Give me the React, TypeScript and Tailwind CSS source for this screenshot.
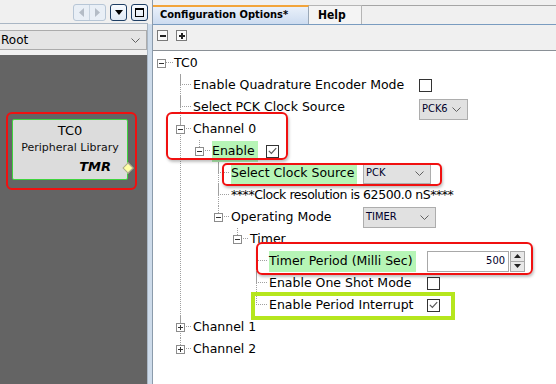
import type { ReactNode } from "react";

type TNode = {
  label: string;
  exp?: "-" | "+";
  green?: boolean;
  lw?: string;
  tight?: boolean;
  ctl?: ReactNode;
  children?: TNode[];
};

const Check = ({ on }: { on?: boolean }) => (
  <span className="flex h-[13px] w-[13px] shrink-0 items-center justify-center border border-[#333] bg-white">
    {on && (
      <svg width="9" height="8" viewBox="0 0 9 8">
        <path d="M0.8 3.8L3.4 6.4L8.2 1.2" stroke="#5a5a5a" strokeWidth="1.2" fill="none" />
      </svg>
    )}
  </span>
);

const Chevron = () => (
  <svg width="9" height="5" viewBox="0 0 9 5">
    <path d="M0.5 0.5L4.5 4.5L8.5 0.5" stroke="#606060" strokeWidth="1" fill="none" />
  </svg>
);

const Combo = ({ text, className }: { text: string; className: string }) => (
  <span className={`flex h-[21px] shrink-0 items-center justify-between border border-[#adadad] bg-[#e1e1e1] pl-[2px] pr-[6px] font-['DejaVu_Sans_Condensed','DejaVu_Sans',sans-serif] text-[11px] text-[#00002a] ${className}`}>
    {text}
    <Chevron />
  </span>
);

const Spin = () => (
  <span className="flex h-[21px] shrink-0 items-stretch">
    <span className="flex w-[82px] items-center justify-end border border-[#a8a8a8] bg-white pr-[3px] font-['DejaVu_Sans_Condensed','DejaVu_Sans',sans-serif] text-[11px] text-[#00002a]">500</span>
    <span className="ml-px flex w-[15px] flex-col border border-[#a8a8a8] bg-[#e8e8e8]">
      <span className="flex flex-1 items-center justify-center border-b border-[#a8a8a8]">
        <svg width="7" height="4" viewBox="0 0 7 4"><path d="M0 4L3.5 0L7 4Z" fill="#222" /></svg>
      </span>
      <span className="flex flex-1 items-center justify-center">
        <svg width="7" height="4" viewBox="0 0 7 4"><path d="M0 0L3.5 4L7 0Z" fill="#222" /></svg>
      </span>
    </span>
  </span>
);

const ExpBox = ({ sign, className }: { sign: "-" | "+"; className: string }) => (
  <span className={`flex h-[9px] w-[9px] items-center justify-center border border-[#8c8c8c] bg-white ${className}`}>
    <span className="relative flex h-[5px] w-[5px] items-center justify-center">
      <span className="h-px w-[5px] bg-[#333]" />
      {sign === "+" && <span className="absolute h-[5px] w-px bg-[#333]" />}
    </span>
  </span>
);

const tree: TNode[] = [
  { label: "Enable Quadrature Encoder Mode", lw: "w-[226px]", ctl: <Check /> },
  { label: "Select PCK Clock Source", lw: "w-[226px]", ctl: <Combo text="PCK6" className="mt-[4px] w-[49px]" /> },
  {
    label: "Channel 0",
    exp: "-",
    children: [
      {
        label: "Enable",
        exp: "-",
        green: true,
        lw: "w-[54px]",
        ctl: <Check on />,
        children: [
          { label: "Select Clock Source", green: true, lw: "w-[132px]", ctl: <Combo text="PCK" className="w-[68px]" /> },
          { label: "****Clock resolution is 62500.0 nS****", tight: true },
          {
            label: "Operating Mode",
            exp: "-",
            lw: "w-[132px]",
            ctl: <Combo text="TIMER" className="w-[73px]" />,
            children: [
              {
                label: "Timer",
                exp: "-",
                children: [
                  { label: "Timer Period (Milli Sec)", green: true, lw: "w-[158px]", ctl: <Spin /> },
                  { label: "Enable One Shot Mode", lw: "w-[158px]", ctl: <Check /> },
                  { label: "Enable Period Interrupt", lw: "w-[158px]", ctl: <Check on /> },
                ],
              },
            ],
          },
        ],
      },
    ],
  },
  { label: "Channel 1", exp: "+" },
  { label: "Channel 2", exp: "+" },
];

function Item({ node, last }: { node: TNode; last: boolean }) {
  return (
    <li className={`border-l border-dotted ${last ? "border-transparent" : "border-[#a0a0a0]"}`}>
      <div className="flex h-[22px] items-center">
        <div className="relative -ml-px h-full w-[13px] shrink-0">
          <div className="h-[11px] w-[11px] border-b border-l border-dotted border-[#a0a0a0]" />
          {node.exp && <ExpBox sign={node.exp} className="absolute left-[-4px] top-[7px]" />}
        </div>
        <div className={`flex shrink-0 items-center ${node.lw ?? ""}`}>
          <span
            className={`flex h-[21px] items-center whitespace-nowrap pr-[3px] ${node.green ? "bg-[#b6f5b6]" : ""} ${node.tight ? "tracking-[-0.45px]" : ""}`}
          >
            {node.label}
          </span>
        </div>
        {node.ctl}
      </div>
      {node.children && (
        <ul className="ml-[18px]">
          {node.children.map((c, i) => (
            <Item key={c.label} node={c} last={i === node.children!.length - 1} />
          ))}
        </ul>
      )}
    </li>
  );
}

const NavBtn = ({ children }: { children: ReactNode }) => (
  <span className="flex h-[17px] w-[17px] items-center justify-center rounded-[3px] border border-[#1d3d63] bg-gradient-to-b from-[#f8fbff] to-[#dfe9f4]">{children}</span>
);

export default function App() {
  return (
    <div className="flex h-[384px] w-[556px] overflow-hidden bg-[#f0f0f0] font-['DejaVu_Sans',sans-serif] text-[12px] text-black">
      {/* left: project graph */}
      <div className="flex w-[148px] shrink-0 flex-col">
        <div className="flex h-[23px] items-start justify-end gap-[4px] pt-[4px]">
          <span className="flex h-[17px] w-[33px] rounded-[3px] border border-[#b7c6d6] bg-[#e9eff6]">
            <span className="flex flex-1 items-center justify-center border-r border-[#c8d4e0]">
              <svg width="5" height="9" viewBox="0 0 5 9"><path d="M5 0L0 4.5L5 9Z" fill="#b4bcc6" /></svg>
            </span>
            <span className="flex flex-1 items-center justify-center">
              <svg width="5" height="9" viewBox="0 0 5 9"><path d="M0 0L5 4.5L0 9Z" fill="#b4bcc6" /></svg>
            </span>
          </span>
          <NavBtn>
            <svg width="8" height="5" viewBox="0 0 8 5"><path d="M0 0L8 0L4 5Z" fill="#000" /></svg>
          </NavBtn>
          <NavBtn>
            <span className="h-[9px] w-[9px] border border-t-2 border-[#000]" />
          </NavBtn>
        </div>
        <div className="flex flex-1 flex-col border-r border-t border-[#a9b6c4]">
          <div className="flex h-[31px] items-start pt-[6px]">
            <div className="flex h-[20px] w-full items-center justify-between border-y border-r border-[#acacac] bg-[#e5e5e5] pl-[1px] pr-[6px] text-[12px]">
              Root
              <Chevron />
            </div>
          </div>
          <div className="flex-1 bg-[#646464] pl-[6px] pt-[57px]">
            <div className="h-[78px] w-[131px] rounded-[6px] border-2 border-[#f01010] pl-[4px] pt-[5px]">
              <div className="relative flex h-[61px] w-[116px] flex-col items-center rounded-[2px] border border-[#3fd43f] bg-[#dcdcdc]">
                <span className="mt-[3px] text-[13px] leading-[16px]">TC0</span>
                <span className="mt-[2px] text-[11px] leading-[14px] text-[#111]">Peripheral Library</span>
                <span className="mt-[4px] self-end pr-[16px] text-[13px] font-bold italic leading-[16px]">TMR</span>
                <span className="absolute right-[-5px] top-[44px] h-[8px] w-[8px] rotate-45 border border-[#a8a890] bg-[#ffffa6]" />
              </div>
            </div>
          </div>
        </div>
      </div>

      {/* splitter */}
      <div className="flex w-[4px] shrink-0 flex-col">
        <div className="h-[24px]" />
        <div className="flex-1 bg-[#cddbea]" />
      </div>

      {/* right: configuration options */}
      <div className="flex flex-1 flex-col border-l border-[#8b9bab]">
        <div className="flex h-[25px] shrink-0 items-end border-b border-[#7a9cc0] pt-[5px]">
          <div className="flex h-[19px] w-[156px] items-center border-t-2 border-r border-[#f2a43a] border-r-[#9aa8b8] bg-gradient-to-b from-[#e9f0fa] to-[#cddcf0] pl-[7px] font-['DejaVu_Sans_Condensed','DejaVu_Sans',sans-serif] text-[11px] font-bold">
            Configuration Options*
          </div>
          <div className="flex h-[19px] w-[53px] items-center border-r border-t border-[#b5b5b5] bg-[#f4f4f4] pl-[9px] font-['DejaVu_Sans_Condensed','DejaVu_Sans',sans-serif] text-[12px] font-bold">
            Help
          </div>
          <div className="h-[19px] flex-1 border-t border-[#a5a5a5]" />
        </div>
        <div className="flex h-[26px] shrink-0 items-start gap-[8px] border-b border-[#8a9096] pl-[4px] pt-[5px]">
          <span className="flex h-[11px] w-[11px] items-center justify-center border border-[#7a7a7a] bg-[#fafafa]">
            <span className="h-[2px] w-[6px] bg-[#222]" />
          </span>
          <span className="relative flex h-[11px] w-[11px] items-center justify-center border border-[#7a7a7a] bg-[#fafafa]">
            <span className="h-[2px] w-[6px] bg-[#222]" />
            <span className="absolute h-[6px] w-[2px] bg-[#222]" />
          </span>
        </div>

        <div className="relative flex-1 bg-white pt-px text-[12.5px]">
          <div className="flex h-[22px] items-center">
            <div className="relative h-full w-[21px] shrink-0">
              <div className="ml-[13px] h-[11px] w-[7px] border-b border-dotted border-[#a0a0a0]" />
              <ExpBox sign="-" className="absolute left-[4px] top-[7px]" />
            </div>
            <span>TC0</span>
          </div>
          <ul className="ml-[27px]">
            {tree.map((n, i) => (
              <Item key={n.label} node={n} last={i === tree.length - 1} />
            ))}
          </ul>

          {/* annotation frames */}
          <div className="absolute left-[13px] top-[61px] h-[48px] w-[122px] rounded-[6px] border-2 border-[#f01010] shadow-[1px_2px_3px_rgba(0,0,0,0.25)]" />
          <div className="absolute left-[69px] top-[112px] h-[23px] w-[220px] rounded-[5px] border-2 border-[#f01010] shadow-[1px_2px_3px_rgba(0,0,0,0.25)]" />
          <div className="absolute left-[103px] top-[191px] h-[33px] w-[277px] rounded-[6px] border-2 border-[#f01010] shadow-[1px_2px_3px_rgba(0,0,0,0.25)]" />
          <div className="absolute left-[98px] top-[241px] h-[28px] w-[204px] border-4 border-[#b5e61d]" />
        </div>
      </div>
    </div>
  );
}
